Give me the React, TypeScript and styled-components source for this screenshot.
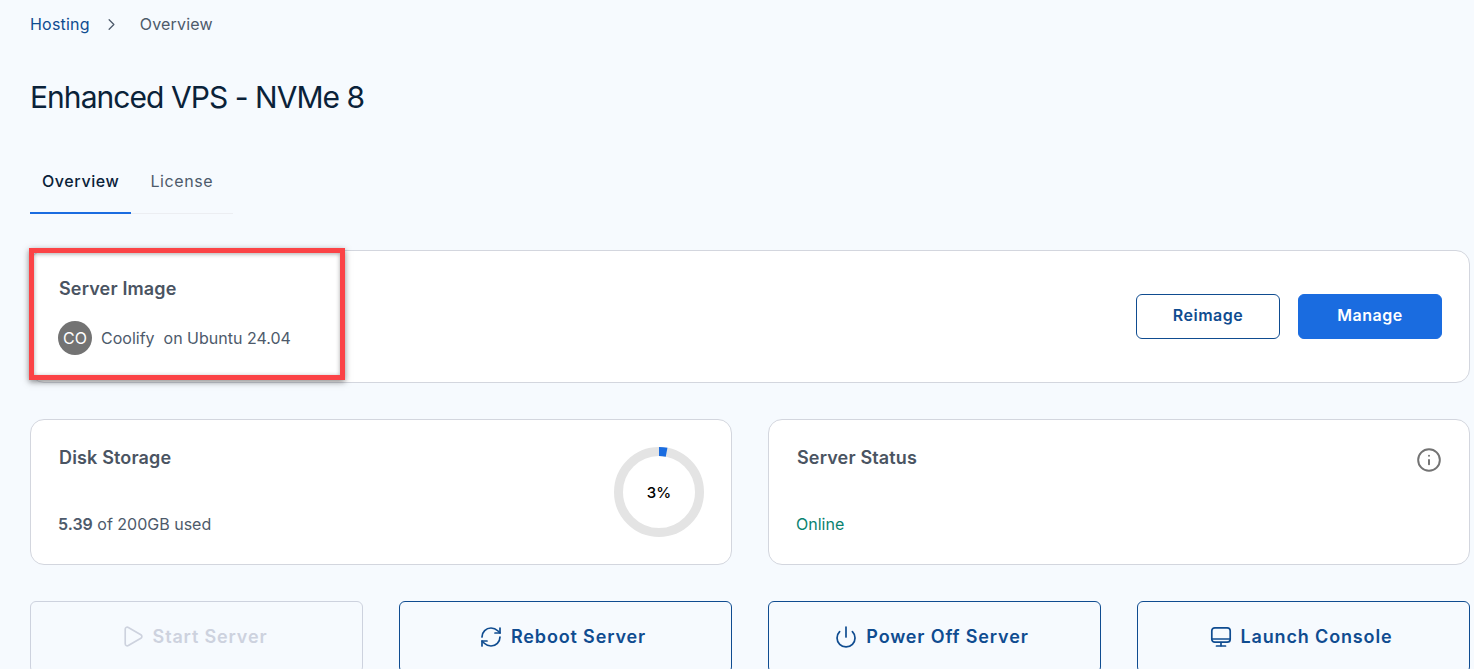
import * as React from "react";
import styled, { createGlobalStyle } from "styled-components";
import { ChevronRight, Info, Play, Power, RefreshCw } from "lucide-react";

const GlobalStyle = createGlobalStyle`
  html, body {
    margin: 0;
    height: 100%;
    overflow: hidden;
    background: #f6fafe;
    font-family: Inter, "Liberation Sans", sans-serif;
  }
`;

const Page = styled.div`
  padding: 0 4px 0 30px;
  height: 669px;
  overflow: hidden;
  box-sizing: border-box;
`;

const Breadcrumb = styled.nav`
  display: flex;
  align-items: center;
  height: 20px;
  margin-top: 14px;
  font-size: 16px;
  line-height: 20px;
  letter-spacing: 0.2px;
`;

const Crumb = styled.span<{ $link?: boolean }>`
  color: ${(p) => (p.$link ? "#0f4c90" : "#4d5a6b")};
`;

const CrumbIcon = styled.span`
  display: flex;
  margin: 0 19px 0 12px;
  color: #4d5a6b;
`;

const Title = styled.h1`
  margin: 43px 0 0;
  font-size: 30px;
  line-height: 40px;
  font-weight: 400;
  letter-spacing: -0.95px;
  color: #0a2239;
`;

const Tabs = styled.div`
  display: flex;
  width: 203px;
  margin-top: 45px;
  border-bottom: 1px solid #eceef2;
`;

const Tab = styled.div<{ $active?: boolean }>`
  height: 52px;
  box-sizing: border-box;
  padding: 0 ${(p) => (p.$active ? 12 : 19)}px 12px;
  margin-bottom: -1px;
  display: flex;
  align-items: center;
  font-size: 16px;
  letter-spacing: 0.6px;
  font-weight: ${(p) => (p.$active ? 500 : 400)};
  color: ${(p) => (p.$active ? "#0a2239" : "#4d5a6b")};
  border-bottom: 2px solid ${(p) => (p.$active ? "#1a6ce0" : "transparent")};
`;

const Card = styled.section`
  position: relative;
  background: #fff;
  border: 1px solid #d3d6de;
  border-radius: 14px;
  box-sizing: border-box;
`;

const ImageCard = styled(Card)`
  display: flex;
  align-items: center;
  justify-content: space-between;
  height: 133px;
  margin-top: 36px;
  padding: 0 27px;
`;

const ImageBlock = styled.div`
  margin-bottom: 1px;
`;

const CardTitle = styled.h2`
  margin: 0 0 0 1px;
  font-size: 18px;
  line-height: 24px;
  font-weight: 600;
  letter-spacing: 0.15px;
  color: #4a5462;
`;

const ImageInfo = styled.div`
  display: flex;
  align-items: center;
  margin-top: 20px;
  font-size: 16px;
  color: #4d5a6b;
`;

const Avatar = styled.span`
  display: flex;
  align-items: center;
  justify-content: center;
  width: 34px;
  height: 34px;
  margin-right: 9px;
  border-radius: 50%;
  background: #737373;
  color: #fff;
  font-size: 16px;
`;

const ImageName = styled.span`
  margin-right: 9px;
`;

const Actions = styled.div`
  display: flex;
  gap: 18px;
`;

const ActionButton = styled.button<{ $primary?: boolean }>`
  width: 144px;
  height: 45px;
  padding: 0 0 4px;
  border-radius: 6px;
  border: 1px solid ${(p) => (p.$primary ? "#1a6ce0" : "#0f4c90")};
  background: ${(p) => (p.$primary ? "#1a6ce0" : "#fff")};
  color: ${(p) => (p.$primary ? "#fff" : "#0f4c90")};
  font-family: inherit;
  font-size: 16px;
  font-weight: 600;
  letter-spacing: 0.5px;
`;

const Highlight = styled.div`
  position: absolute;
  left: -2px;
  top: -3px;
  width: 316px;
  height: 132px;
  box-sizing: border-box;
  border: 5px solid #fb4346;
  box-shadow: 0 2px 6px rgba(40, 40, 40, 0.55), inset 0 1px 4px rgba(40, 40, 40, 0.4);
  pointer-events: none;
`;

const StatRow = styled.div`
  display: grid;
  grid-template-columns: 1fr 1fr;
  gap: 36px;
  margin-top: 36px;
`;

const StatCard = styled(Card)`
  display: flex;
  justify-content: space-between;
  height: 146px;
  padding: 26px 27px 0;
`;

const StatText = styled.div`
  display: flex;
  flex-direction: column;
`;

const StatValue = styled.div<{ $online?: boolean }>`
  margin-top: 44px;
  font-size: 16px;
  line-height: 20px;
  color: ${(p) => (p.$online ? "#0a8270" : "#4d5a6b")};

  b {
    font-weight: 600;
  }
`;

const Gauge = styled.div`
  position: relative;
  width: 92px;
  height: 92px;
  margin: 0 -1px 0 0;
`;

const GaugeLabel = styled.span`
  position: absolute;
  inset: 0;
  display: flex;
  align-items: center;
  justify-content: center;
  font-size: 15px;
  font-weight: 500;
  color: #000;
`;

const InfoIcon = styled.span`
  display: flex;
  margin: 1px 0 0;
  color: #737373;
`;

const ButtonRow = styled.div`
  display: grid;
  grid-template-columns: repeat(4, 1fr);
  gap: 36px;
  margin-top: 36px;
`;

const ServerButton = styled.button<{ $disabled?: boolean }>`
  display: flex;
  align-items: center;
  justify-content: center;
  gap: 8px;
  height: 72px;
  border-radius: 6px;
  background: transparent;
  border: 1px solid ${(p) => (p.$disabled ? "#cdd2de" : "#0f4c90")};
  color: ${(p) => (p.$disabled ? "#cdd2de" : "#0f4c90")};
  font-family: inherit;
  font-size: 18px;
  font-weight: 600;
  letter-spacing: 0.85px;
  padding: 0 6px 1px 0;
`;

const DiskGauge = () => {
  const r = 40.5;
  const c = 2 * Math.PI * r;
  return (
    <svg width="92" height="92" viewBox="0 0 92 92">
      <circle cx="46" cy="46" r={r} fill="none" stroke="#e4e4e4" strokeWidth="9" />
      <circle
        cx="46"
        cy="46"
        r={r}
        fill="none"
        stroke="#1a6ce0"
        strokeWidth="9"
        strokeDasharray={`${c * 0.03} ${c}`}
        transform="rotate(-90 46 46)"
      />
    </svg>
  );
};

const ConsoleIcon = () => (
  <svg width="24" height="24" viewBox="0 0 24 24" fill="none" stroke="currentColor" strokeWidth="1.7" strokeLinecap="round">
    <rect x="2.8" y="2.8" width="18.4" height="14.4" rx="3" />
    <path d="M3 14h18" />
    <path d="M12 17.5v3.2" />
    <path d="M7.5 21h9" />
  </svg>
);

export default function App() {
  return (
    <Page>
      <GlobalStyle />
      <Breadcrumb>
        <Crumb $link>Hosting</Crumb>
        <CrumbIcon>
          <ChevronRight size={19} strokeWidth={1.6} />
        </CrumbIcon>
        <Crumb>Overview</Crumb>
      </Breadcrumb>
      <Title>Enhanced VPS - NVMe 8</Title>
      <Tabs>
        <Tab $active>Overview</Tab>
        <Tab>License</Tab>
      </Tabs>
      <ImageCard>
        <ImageBlock>
          <CardTitle>Server Image</CardTitle>
          <ImageInfo>
            <Avatar>CO</Avatar>
            <ImageName>Coolify</ImageName>
            <span>on Ubuntu 24.04</span>
          </ImageInfo>
        </ImageBlock>
        <Actions>
          <ActionButton>Reimage</ActionButton>
          <ActionButton $primary>Manage</ActionButton>
        </Actions>
        <Highlight />
      </ImageCard>
      <StatRow>
        <StatCard>
          <StatText>
            <CardTitle>Disk Storage</CardTitle>
            <StatValue>
              <b>5.39</b> of 200GB used
            </StatValue>
          </StatText>
          <Gauge>
            <DiskGauge />
            <GaugeLabel>3%</GaugeLabel>
          </Gauge>
        </StatCard>
        <StatCard>
          <StatText>
            <CardTitle>Server Status</CardTitle>
            <StatValue $online>Online</StatValue>
          </StatText>
          <InfoIcon>
            <Info size={26} strokeWidth={1.8} />
          </InfoIcon>
        </StatCard>
      </StatRow>
      <ButtonRow>
        <ServerButton $disabled>
          <Play size={25} strokeWidth={1.6} />
          Start Server
        </ServerButton>
        <ServerButton>
          <RefreshCw size={24} strokeWidth={1.7} />
          Reboot Server
        </ServerButton>
        <ServerButton>
          <Power size={24} strokeWidth={1.7} />
          Power Off Server
        </ServerButton>
        <ServerButton>
          <ConsoleIcon />
          Launch Console
        </ServerButton>
      </ButtonRow>
    </Page>
  );
}
